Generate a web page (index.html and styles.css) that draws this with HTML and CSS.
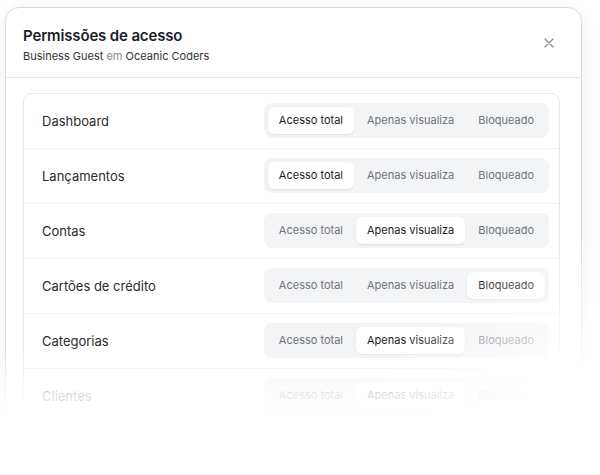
FILE: index.html
```html
<!DOCTYPE html>
<html lang="pt-BR">

<head>
    <meta charset="UTF-8">
    <meta name="viewport" content="width=device-width, initial-scale=1.0">
    <title>Permissões de acesso</title>
    <link rel="stylesheet" href="styles.css">
</head>

<body>
    <div class="modal">
        <!-- Header -->
        <div class="modal-header">
            <div>
                <h1>Permissões de acesso</h1>
                <p class="subtitle"><strong>Business Guest</strong> em <strong>Oceanic Coders</strong></p>
            </div>
            <button class="close-btn" aria-label="Fechar">
                <svg width="10" height="10" viewBox="0 0 10 10">
                    <path d="M1 1L9 9M9 1L1 9" stroke="#8a8a8a" stroke-width="1.2" stroke-linecap="round" />
                </svg>
            </button>
        </div>

        <!-- Permission list -->
        <div class="modal-body">
            <div class="perm-list">
                <div class="perm-row">
                    <span class="perm-name">Dashboard</span>
                    <div class="segment">
                        <span class="seg-btn active">Acesso total</span>
                        <span class="seg-btn">Apenas visualiza</span>
                        <span class="seg-btn">Bloqueado</span>
                    </div>
                </div>
                <div class="perm-row">
                    <span class="perm-name">Lançamentos</span>
                    <div class="segment">
                        <span class="seg-btn active">Acesso total</span>
                        <span class="seg-btn">Apenas visualiza</span>
                        <span class="seg-btn">Bloqueado</span>
                    </div>
                </div>
                <div class="perm-row">
                    <span class="perm-name">Contas</span>
                    <div class="segment">
                        <span class="seg-btn">Acesso total</span>
                        <span class="seg-btn active">Apenas visualiza</span>
                        <span class="seg-btn">Bloqueado</span>
                    </div>
                </div>
                <div class="perm-row">
                    <span class="perm-name">Cartões de crédito</span>
                    <div class="segment">
                        <span class="seg-btn">Acesso total</span>
                        <span class="seg-btn">Apenas visualiza</span>
                        <span class="seg-btn active">Bloqueado</span>
                    </div>
                </div>
                <div class="perm-row">
                    <span class="perm-name">Categorias</span>
                    <div class="segment">
                        <span class="seg-btn">Acesso total</span>
                        <span class="seg-btn active">Apenas visualiza</span>
                        <span class="seg-btn">Bloqueado</span>
                    </div>
                </div>
                <div class="perm-row">
                    <span class="perm-name">Clientes</span>
                    <div class="segment">
                        <span class="seg-btn">Acesso total</span>
                        <span class="seg-btn active">Apenas visualiza</span>
                        <span class="seg-btn">Bloqueado</span>
                    </div>
                </div>
                <div class="perm-row">
                    <span class="perm-name">Relatórios</span>
                    <div class="segment">
                        <span class="seg-btn active">Acesso total</span>
                        <span class="seg-btn">Apenas visualiza</span>
                        <span class="seg-btn">Bloqueado</span>
                    </div>
                </div>
            </div>
        </div>
    </div>

    <!-- fade out over the bottom / right -->
    <div class="fade"></div>
</body>

</html>
```

FILE: styles.css
```css
body {
    font-family: Inter, "Noto Sans", sans-serif;
    margin: 0;
    padding: 0;
    background-color: #fff;
    height: 475px;
    overflow: hidden;
}

.modal {
    width: 575px;
    margin: 7px 0 0 5px;
    border: 1px solid #dcdcdc;
    border-radius: 14px;
    background-color: #fff;
    box-shadow: 0 4px 18px rgba(0, 0, 0, 0.07);
}

.modal-header {
    display: flex;
    justify-content: space-between;
    align-items: center;
    padding: 18px 27px 14px 17px;
    border-bottom: 1px solid #e6e6e6;
}

.modal-header h1 {
    margin: 0;
    font-size: 15px;
    font-weight: 600;
    color: #1b1e2b;
    letter-spacing: -0.01em;
}

.subtitle {
    margin: 4px 0 0;
    font-size: 11px;
    color: #8a8a8a;
}

.subtitle strong {
    font-weight: 400;
    color: #333;
}

.close-btn {
    border: none;
    background: none;
    padding: 0;
    margin-top: -4px;
    display: flex;
}

.modal-body {
    padding: 15px 21px 0 17px;
}

.perm-list {
    border: 1px solid #e8e8e8;
    border-radius: 9px;
}

.perm-row {
    display: flex;
    justify-content: space-between;
    align-items: center;
    height: 54px;
    padding: 0 10px 0 18px;
    border-bottom: 1px solid #f1f1f1;
}

.perm-row:last-child {
    border-bottom: none;
}

.perm-name {
    font-size: 13px;
    color: #2b2b2b;
}

.segment {
    display: flex;
    gap: 2px;
    padding: 4px;
    background-color: #f3f4f6;
    border-radius: 8px;
    margin-top: -1px;
}

.seg-btn {
    height: 27px;
    line-height: 27px;
    padding: 0 11px;
    font-size: 11px;
    color: #70737c;
    border-radius: 6px;
}

.seg-btn.active {
    background-color: #fff;
    color: #1c1c1c;
    box-shadow: 0 1px 2px rgba(0, 0, 0, 0.08);
}

.fade {
    position: absolute;
    top: 0;
    left: 0;
    width: 600px;
    height: 475px;
    pointer-events: none;
    background:
        linear-gradient(to bottom, rgba(255, 255, 255, 0) 345px, rgba(255, 255, 255, 0.8) 392px, #fff 425px),
        radial-gradient(circle at 600px 475px, #fff 100px, rgba(255, 255, 255, 0) 240px);
}
```
